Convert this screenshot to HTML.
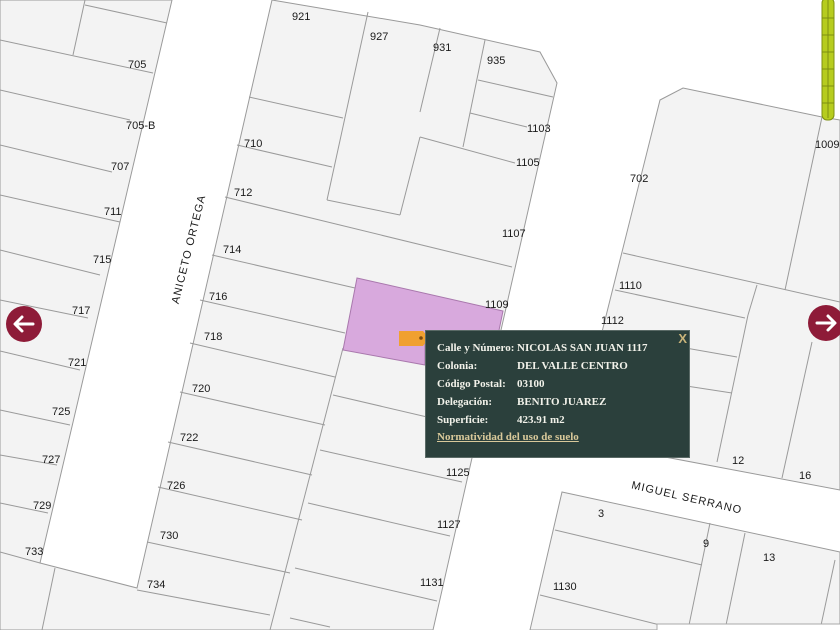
<!DOCTYPE html>
<html><head><meta charset="utf-8"><style>
html,body{margin:0;padding:0;width:840px;height:630px;overflow:hidden;background:#fff}
svg{position:absolute;left:0;top:0}
.l{font-family:"Liberation Sans",sans-serif;font-size:11px;fill:#1a1a1a}
#pop{position:absolute;left:425px;top:330px;width:265px;height:128px;background:#2b403c;border:1px solid #5a6a66;box-sizing:border-box;font-family:"Liberation Serif",serif;font-weight:bold;font-size:11px;color:#f2f2ea}
#pop .r{position:absolute;left:11px;white-space:nowrap}
#pop .v{position:absolute;left:80px}
#pop a{position:absolute;left:11px;top:100px;color:#d9c99a;text-decoration:underline;font-size:11px}
#pop .x{position:absolute;right:2px;top:0px;color:#c9b47a;font-family:"Liberation Sans",sans-serif;font-size:13px}
</style></head><body>
<svg width="840" height="630" viewBox="0 0 840 630">
<g fill="#f3f3f3" stroke="#9a9a9a" stroke-width="1">
<polygon points="0,0 172,0 40,563 137,588 272,0 420,25 540,52 557,83 433,630 0,630"/>
<polygon points="660,100 683,88 822,117 840,120 840,490 575,440"/>
<polygon points="562,492 840,552 840,630 530,630"/>
</g>
<g stroke="#9a9a9a" stroke-width="1" fill="none">
<line x1="85" y1="5" x2="167" y2="23"/><line x1="0" y1="40" x2="153" y2="73"/><line x1="73" y1="55" x2="85" y2="0"/>
<line x1="0" y1="90" x2="130" y2="120"/><line x1="0" y1="145" x2="112" y2="172"/><line x1="0" y1="195" x2="120" y2="222"/>
<line x1="0" y1="250" x2="100" y2="275"/><line x1="0" y1="300" x2="88" y2="318"/><line x1="0" y1="351" x2="80" y2="370"/><line x1="0" y1="410" x2="70" y2="425"/>
<line x1="0" y1="455" x2="57" y2="465"/><line x1="0" y1="503" x2="48" y2="513"/><line x1="0" y1="552" x2="40" y2="563"/><line x1="55" y1="568" x2="42" y2="630"/>
<line x1="249" y1="97" x2="343" y2="118"/><line x1="237" y1="145" x2="332" y2="167"/><line x1="225" y1="197" x2="512" y2="267"/><line x1="212" y1="255" x2="355" y2="288"/>
<line x1="368" y1="12" x2="327" y2="200"/><line x1="327" y1="200" x2="400" y2="215"/><line x1="440" y1="28" x2="420" y2="112"/><line x1="485" y1="40" x2="463" y2="147"/>
<line x1="400" y1="215" x2="420" y2="137"/><line x1="420" y1="137" x2="515" y2="163"/><line x1="478" y1="80" x2="553" y2="97"/><line x1="470" y1="113" x2="527" y2="127"/>
<line x1="200" y1="300" x2="345" y2="333"/>
<line x1="190" y1="343" x2="335" y2="377"/><line x1="180" y1="392" x2="325" y2="425"/><line x1="168" y1="442" x2="312" y2="475"/><line x1="158" y1="487" x2="302" y2="520"/>
<line x1="147" y1="542" x2="290" y2="573"/><line x1="137" y1="590" x2="270" y2="615"/><line x1="343" y1="348" x2="270" y2="630"/>
<line x1="333" y1="395" x2="470" y2="427"/><line x1="320" y1="450" x2="462" y2="482"/><line x1="308" y1="503" x2="450" y2="536"/><line x1="295" y1="568" x2="437" y2="601"/><line x1="290" y1="618" x2="330" y2="627"/>
<line x1="623" y1="253" x2="840" y2="302"/><line x1="615" y1="290" x2="745" y2="318"/><line x1="785" y1="290" x2="822" y2="117"/><line x1="757" y1="285" x2="748" y2="315"/>
<line x1="600" y1="333" x2="737" y2="357"/><line x1="595" y1="372" x2="732" y2="393"/><line x1="748" y1="315" x2="717" y2="462"/><line x1="812" y1="342" x2="782" y2="478"/>
<line x1="555" y1="530" x2="702" y2="565"/><line x1="710" y1="523" x2="688" y2="630"/><line x1="745" y1="533" x2="725" y2="630"/><line x1="540" y1="595" x2="660" y2="625"/><line x1="835" y1="560" x2="820" y2="630"/>
</g>
<polygon points="357,278 503,311 497,340 425,340 425,365 343,350" fill="#d8a9dd" stroke="#a978ad" stroke-width="1"/>
<rect x="657" y="624" width="190" height="10" fill="#fff" stroke="#aaa"/>
<g fill="#b6cc1e" stroke="#7d8f10" stroke-width="1"><rect x="822" y="-2" width="12" height="122" rx="5"/></g>
<g stroke="#7d8f10" stroke-width="1"><line x1="828" y1="0" x2="828" y2="118"/><line x1="822" y1="18" x2="834" y2="18"/><line x1="822" y1="35" x2="834" y2="35"/><line x1="822" y1="52" x2="834" y2="52"/><line x1="822" y1="69" x2="834" y2="69"/><line x1="822" y1="86" x2="834" y2="86"/><line x1="822" y1="103" x2="834" y2="103"/></g>
<g class="l">
<text class="l" x="128" y="68">705</text><text class="l" x="126" y="129">705-B</text><text class="l" x="111" y="170">707</text><text class="l" x="104" y="215">711</text>
<text class="l" x="93" y="263">715</text><text class="l" x="72" y="314">717</text><text class="l" x="68" y="366">721</text><text class="l" x="52" y="415">725</text>
<text class="l" x="42" y="463">727</text><text class="l" x="33" y="509">729</text><text class="l" x="25" y="555">733</text>
<text class="l" x="292" y="20">921</text><text class="l" x="370" y="40">927</text><text class="l" x="433" y="51">931</text><text class="l" x="487" y="64">935</text>
<text class="l" x="244" y="147">710</text><text class="l" x="234" y="196">712</text><text class="l" x="223" y="253">714</text><text class="l" x="209" y="300">716</text>
<text class="l" x="204" y="340">718</text><text class="l" x="192" y="392">720</text><text class="l" x="180" y="441">722</text><text class="l" x="167" y="489">726</text>
<text class="l" x="160" y="539">730</text><text class="l" x="147" y="588">734</text>
<text class="l" x="527" y="132">1103</text><text class="l" x="516" y="166">1105</text><text class="l" x="502" y="237">1107</text><text class="l" x="485" y="308">1109</text>
<text class="l" x="619" y="289">1110</text><text class="l" x="601" y="324">1112</text><text class="l" x="446" y="476">1125</text><text class="l" x="437" y="528">1127</text>
<text class="l" x="420" y="586">1131</text><text class="l" x="630" y="182">702</text><text class="l" x="815" y="148">1009</text>
<text class="l" x="732" y="464">12</text><text class="l" x="799" y="479">16</text><text class="l" x="598" y="517">3</text><text class="l" x="703" y="547">9</text>
<text class="l" x="763" y="561">13</text><text class="l" x="553" y="590">1130</text>
<text class="l" transform="translate(192,250) rotate(-76)" text-anchor="middle" style="letter-spacing:1px">ANICETO ORTEGA</text>
<text class="l" transform="translate(686,501) rotate(13)" text-anchor="middle" style="letter-spacing:1px">MIGUEL SERRANO</text>
</g>
<circle cx="24" cy="324" r="18" fill="#8e1b38"/>
<path d="M33 324H16M22 317l-7 7 7 7" stroke="#fff" stroke-width="3" fill="none" stroke-linecap="round" stroke-linejoin="round"/>
<circle cx="826" cy="323" r="18" fill="#8e1b38"/>
<path d="M817 323H834M828 316l7 7-7 7" stroke="#fff" stroke-width="3" fill="none" stroke-linecap="round" stroke-linejoin="round"/>
<polygon points="399,331 423,331 429,338 423,346 399,346" fill="#f0a030"/>
<circle cx="421" cy="338" r="1.8" fill="#7a4a10"/>
</svg>
<div id="pop">
<div class="r" style="top:11px">Calle y Número:<span class="v">NICOLAS SAN JUAN 1117</span></div>
<div class="r" style="top:29px">Colonia:<span class="v">DEL VALLE CENTRO</span></div>
<div class="r" style="top:47px">Código Postal:<span class="v">03100</span></div>
<div class="r" style="top:65px">Delegación:<span class="v">BENITO JUAREZ</span></div>
<div class="r" style="top:83px">Superficie:<span class="v">423.91 m2</span></div>
<a>Normatividad del uso de suelo</a>
<div class="x">X</div>
</div>
</body></html>
